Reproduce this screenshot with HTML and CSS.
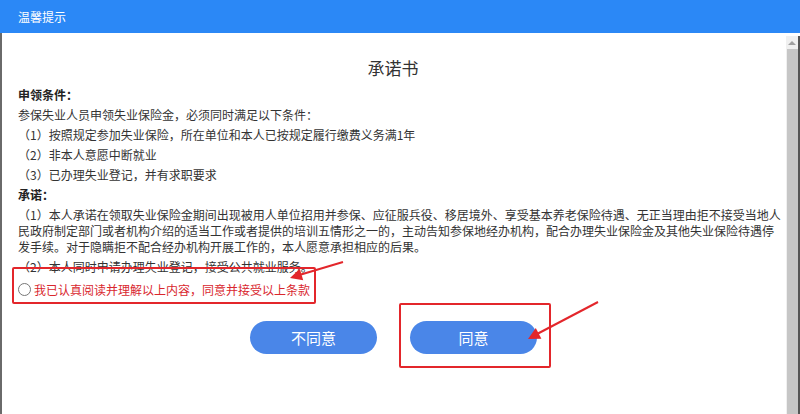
FILE: index.html
```html
<!DOCTYPE html>
<html lang="zh-CN">
<head>
    <meta charset="UTF-8">
    <meta name="viewport" content="width=device-width, initial-scale=1.0">
    <title>温馨提示</title>
    <link rel="stylesheet" href="styles.css">
</head>
<body>
    <div id="dialog">
        <div class="dialog-header">温馨提示</div>
        <div class="dialog-main">
            <div class="dialog-body">
                <h2 class="doc-title">承诺书</h2>
                <p class="section">申领条件：</p>
                <p>参保失业人员申领失业保险金，必须同时满足以下条件：</p>
                <p>（1）按照规定参加失业保险，所在单位和本人已按规定履行缴费义务满1年</p>
                <p>（2）非本人意愿中断就业</p>
                <p>（3）已办理失业登记，并有求职要求</p>
                <p class="section">承诺：</p>
                <p>（1）本人承诺在领取失业保险金期间出现被用人单位招用并参保、应征服兵役、移居境外、享受基本养老保险待遇、无正当理由拒不接受当地人民政府制定部门或者机构介绍的适当工作或者提供的培训五情形之一的，主动告知参保地经办机构，配合办理失业保险金及其他失业保险待遇停发手续。对于隐瞒拒不配合经办机构开展工作的，本人愿意承担相应的后果。</p>
                <p>（2）本人同时申请办理失业登记，接受公共就业服务。</p>
                <label class="agree">
                    <span class="radio"></span>
                    <span>我已认真阅读并理解以上内容，同意并接受以上条款</span>
                </label>
                <div class="actions">
                    <button type="button" class="btn">不同意</button>
                    <button type="button" class="btn">同意</button>
                </div>
            </div>
            <div class="scrollbar">
                <span class="scroll-up"></span>
                <span class="scroll-thumb"></span>
            </div>
        </div>

        <!-- red annotation marks -->
        <div class="mark mark-agree"></div>
        <div class="mark mark-btn"></div>
        <svg class="arrows" width="800" height="414" viewBox="0 0 800 414">
            <line x1="343" y1="262" x2="301" y2="274.5" stroke="#e3262b" stroke-width="2"/>
            <polygon points="290,278 303.2,280.2 299.8,268.8" fill="#e3262b"/>
            <line x1="598" y1="302" x2="538" y2="333.5" stroke="#e3262b" stroke-width="2"/>
            <polygon points="528,339 541.4,338.7 535.8,328.1" fill="#e3262b"/>
        </svg>
    </div>
</body>
</html>
```

FILE: styles.css
```css
body {
    margin: 0;
    padding: 0;
    background-color: #fff;
    font-family: "Noto Sans CJK SC", "Noto Sans", sans-serif;
    color: #333;
}

#dialog {
    position: relative;
    width: 800px;
    height: 414px;
    overflow: hidden;
    background-color: #fff;
}

.dialog-header {
    height: 33px;
    line-height: 33px;
    padding-left: 18px;
    background-color: #2b88f6;
    color: #fff;
    font-size: 12px;
}

.dialog-main {
    display: flex;
    height: 381px;
    border-left: 2px solid #6a6a6a;
}

.dialog-body {
    flex: 1;
    padding: 23px 3px 0 16px;
}

.doc-title {
    margin: 0 0 7px;
    padding-right: 15px;
    font-size: 17px;
    font-weight: normal;
    line-height: 24px;
    text-align: center;
    color: #333;
}

p {
    margin: 0 0 4px;
    font-size: 12px;
    line-height: 16px;
}

.section {
    font-weight: bold;
    color: #222;
}

.agree {
    display: flex;
    align-items: center;
    gap: 3px;
    height: 20px;
    margin-top: 4px;
    font-size: 12px;
    color: #d9272e;
}

.radio {
    width: 11px;
    height: 11px;
    border: 1px solid #777;
    border-radius: 50%;
    background-color: #fff;
}

.actions {
    display: flex;
    justify-content: center;
    gap: 33px;
    margin-top: 22px;
    padding-right: 14px;
}

.btn {
    width: 127px;
    height: 33px;
    border: none;
    border-radius: 17px;
    background-color: #4a86e8;
    color: #fff;
    font-family: inherit;
    font-size: 15px;
    cursor: pointer;
}

.scrollbar {
    display: flex;
    flex-direction: column;
    align-items: center;
    width: 12px;
    margin-top: 3px;
    border-right: 2px solid #555;
    background-color: #f0f0f0;
}

.scroll-up {
    width: 0;
    height: 0;
    margin: 5px 0 4px;
    border-left: 4px solid transparent;
    border-right: 4px solid transparent;
    border-bottom: 4px solid #a0a0a0;
}

.scroll-thumb {
    flex: 1;
    width: 11px;
    background-color: #c6c6c6;
}

.mark {
    position: absolute;
    border: 2px solid #e3262b;
    border-radius: 2px;
}

.mark-agree {
    left: 12px;
    top: 267px;
    width: 300px;
    height: 33px;
}

.mark-btn {
    left: 399px;
    top: 303px;
    width: 148px;
    height: 61px;
}

.arrows {
    position: absolute;
    left: 0;
    top: 0;
    pointer-events: none;
}
```
